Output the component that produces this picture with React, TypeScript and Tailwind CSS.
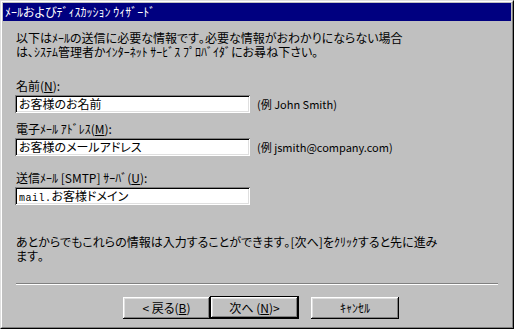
import React from "react";

const font = "font-['Noto_Sans_CJK_JP','Noto_Sans',sans-serif] [font-feature-settings:'palt']";

const raised =
  "shadow-[inset_-1px_-1px_#000,inset_1px_1px_#fff,inset_-2px_-2px_#808080,inset_2px_2px_#dfdfdf]";
const sunken =
  "shadow-[inset_1px_1px_#808080,inset_-1px_-1px_#fff,inset_2px_2px_#000,inset_-2px_-2px_#dfdfdf]";

// half-width katakana keep their full 6px cell
function H({ children }: { children: React.ReactNode }) {
  return <span className="[font-feature-settings:normal]">{children}</span>;
}

function Field({ label, value, hint }: { label: React.ReactNode; value: React.ReactNode; hint?: string }) {
  return (
    <div className="flex flex-col">
      <div className="h-[14px] leading-[14px] pl-[1px] whitespace-nowrap">{label}</div>
      <div className="flex items-center mt-[2px]">
        <div className={`w-[235px] h-[18px] bg-white ${sunken} pl-[4px] leading-[18px] whitespace-nowrap`}>
          {value}
        </div>
        {hint && <span className="ml-[7px] text-[11px] leading-[14px]">{hint}</span>}
      </div>
    </div>
  );
}

export default function App() {
  return (
    <div className={`w-[514px] h-[329px] bg-[#c0c0c0] border border-t-[#dfdfdf] border-l-[#dfdfdf] border-r-black border-b-black text-black text-[12px] ${font}`}>
      <div className="h-full border border-t-white border-l-white border-r-[#808080] border-b-[#808080] p-px flex flex-col">
        <div className="h-[18px] bg-[#000080] text-white leading-[18px] pl-[2px] whitespace-nowrap">
          <H>ﾒｰﾙ</H>および<H>ﾃﾞｨｽｶｯｼｮﾝ ｳｨｻﾞｰﾄﾞ</H>
        </div>

        <div className="pl-[12px] flex flex-col">
          <div className="mt-[10px] pl-[1px] leading-[14px] whitespace-nowrap">
            <div className="h-[14px]">
              以下は<H>ﾒｰﾙ</H>の送信に必要な情報です<H>｡</H>必要な情報がおわかりにならない場合
            </div>
            <div className="h-[14px]">
              は<H>､ｼｽﾃﾑ</H>管理者か<H>ｲﾝﾀｰﾈｯﾄ ｻｰﾋﾞｽ ﾌﾟﾛﾊﾞｲﾀﾞ</H>にお尋ね下さい<H>｡</H>
            </div>
          </div>

          <div className="mt-[20px]">
            <Field
              label={<>名前(<span className="underline">N</span>):</>}
              value="お客様のお名前"
              hint="(例 John Smith)"
            />
          </div>
          <div className="mt-[9px]">
            <Field
              label={<>電子<H>ﾒｰﾙ ｱﾄﾞﾚｽ</H>(<span className="underline">M</span>):</>}
              value="お客様のメールアドレス"
              hint="(例 jsmith@company.com)"
            />
          </div>
          <div className="mt-[15px]">
            <Field
              label={<>送信<H>ﾒｰﾙ</H> [SMTP] <H>ｻｰﾊﾞ</H>(<span className="underline">U</span>):</>}
              value={
                <>
                  <span className="font-['Liberation_Mono',monospace] text-[10px] tracking-[0.5px]">mail.</span>
                  お客様ドメイン
                </>
              }
            />
          </div>

          <div className="mt-[30px] pl-[1px] leading-[14px] whitespace-nowrap">
            <div className="h-[14px]">
              あとからでもこれらの情報は入力することができます<H>｡</H>[次へ]を<H>ｸﾘｯｸ</H>すると先に進み
            </div>
            <div className="h-[14px]">
              ます<H>｡</H>
            </div>
          </div>

          <div className="mt-[20px] ml-[1px] w-[482px]">
            <div className="h-px bg-[#808080]" />
            <div className="h-px bg-white" />
          </div>

          <div className="mt-[11px] ml-[108px] flex items-center">
            <button className={`w-[87px] h-[22px] bg-[#c0c0c0] ${raised} leading-[22px] whitespace-pre`}>
              {"< 戻る("}<span className="underline">B</span>{")"}
            </button>
            <button className={`w-[89px] h-[23px] bg-[#c0c0c0] border border-black ${raised} leading-[21px] whitespace-pre`}>
              {"次へ ("}<span className="underline">N</span>{")>"}
            </button>
            <button className={`ml-[12px] w-[88px] h-[22px] bg-[#c0c0c0] ${raised} leading-[22px]`}>
              <H>ｷｬﾝｾﾙ</H>
            </button>
          </div>
        </div>
      </div>
    </div>
  );
}
